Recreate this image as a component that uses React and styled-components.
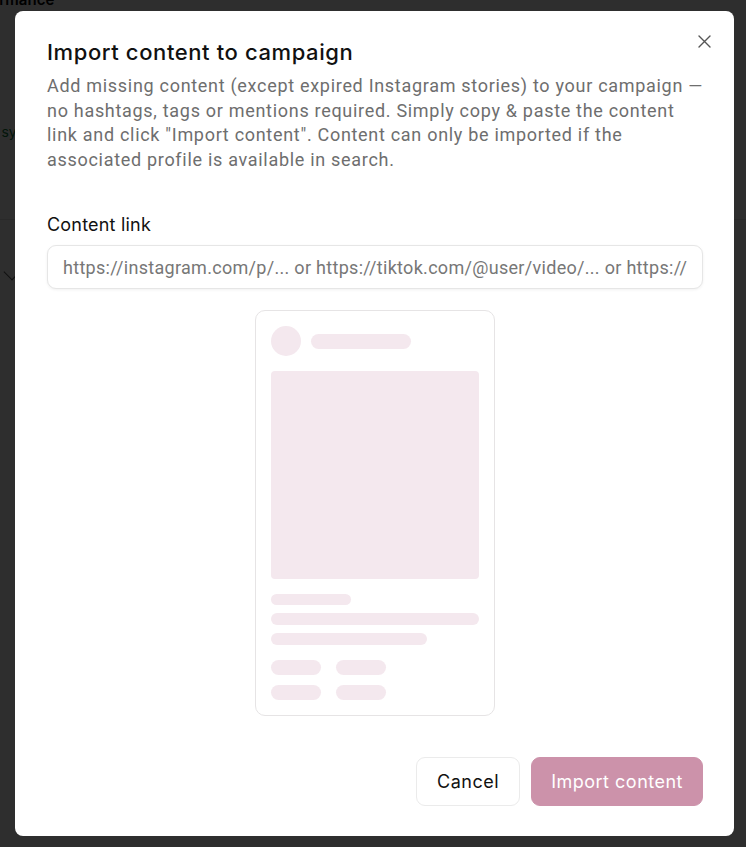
import React from "react";
import styled, { createGlobalStyle } from "styled-components";

const Global = createGlobalStyle`
  html, body { margin: 0; padding: 0; }
  body {
    width: 746px;
    height: 847px;
    overflow: hidden;
    font-family: Inter, "Noto Sans", sans-serif;
    background: #ffffff;
  }
  * { box-sizing: border-box; }
`;

const Page = styled.div`
  width: 746px;
  height: 847px;
  overflow: hidden;
  background: #ffffff;
  display: flex;
  flex-direction: column;
`;

const PageHeading = styled.div`
  font-family: Inter, sans-serif;
  font-weight: 600;
  font-size: 15px;
  line-height: 16px;
  margin: -8px 0 0 -40px;
  color: #000;
  white-space: nowrap;
`;

const PageNote = styled.div`
  margin: 115px 0 0 -64px;
  font-family: Inter, sans-serif;
  font-size: 14px;
  color: #0f7a3a;
  white-space: nowrap;
`;

const PageDivider = styled.div`
  margin-top: 79px;
  height: 1px;
  background: #e2e2e2;
`;

const PageChevron = styled.div`
  margin: 46px 0 0 6px;
  width: 12px;
  height: 12px;
  border-right: 1.5px solid #555;
  border-bottom: 1.5px solid #555;
  transform: rotate(45deg);
`;

const Overlay = styled.div`
  position: fixed;
  inset: 0;
  background: rgba(0, 0, 0, 0.82);
`;

const Modal = styled.div`
  position: fixed;
  left: 15px;
  top: 11px;
  width: 719px;
  height: 825px;
  background: #ffffff;
  border-radius: 8px;
  padding: 26px 31px 30px 32px;
  display: flex;
  flex-direction: column;
`;

const CloseButton = styled.button`
  position: absolute;
  top: 18px;
  right: 18px;
  width: 24px;
  height: 24px;
  padding: 0;
  border: none;
  background: transparent;
  display: flex;
  align-items: center;
  justify-content: center;
  color: #555;
  cursor: pointer;
`;

const Title = styled.h2`
  margin: 0;
  font-family: Inter, sans-serif;
  font-weight: 500;
  font-size: 22px;
  line-height: 30px;
  color: #111;
  letter-spacing: 0.6px;
`;

const Description = styled.p`
  margin: 7px 0 0;
  font-family: Roboto, sans-serif;
  font-size: 18px;
  line-height: 24.6px;
  letter-spacing: 0.7px;
  color: #6e6e6e;
  white-space: nowrap;
`;

const Field = styled.div`
  margin-top: 42px;
  display: flex;
  flex-direction: column;
  gap: 9px;
`;

const Label = styled.label`
  font-family: Inter, sans-serif;
  font-size: 18px;
  line-height: 22px;
  letter-spacing: 0.2px;
  color: #111;
`;

const Input = styled.input`
  width: 100%;
  height: 44px;
  border: 1px solid #e6e6e6;
  border-radius: 9px;
  padding: 0 15px;
  font-family: Roboto, sans-serif;
  font-size: 18px;
  letter-spacing: 0.3px;
  color: #111;
  background: #fff;
  box-shadow: 0 1px 3px rgba(0, 0, 0, 0.06);
  outline: none;
  &::placeholder { color: #777; }
`;

const PreviewWrap = styled.div`
  margin-top: 21px;
  display: flex;
  justify-content: center;
`;

const PreviewCard = styled.div`
  width: 240px;
  height: 406px;
  border: 1px solid #e6e4e5;
  border-radius: 10px;
  padding: 15px;
  display: flex;
  flex-direction: column;
`;

const Row = styled.div`
  display: flex;
  align-items: center;
  gap: ${(p) => p.$gap || 10}px;
  margin-top: ${(p) => p.$mt || 0}px;
`;

const skeleton = "#f4e8ee";

const Avatar = styled.div`
  width: 30px;
  height: 30px;
  border-radius: 50%;
  background: ${skeleton};
`;

const Bar = styled.div`
  width: ${(p) => p.$w}px;
  height: ${(p) => p.$h}px;
  border-radius: ${(p) => p.$h / 2}px;
  background: ${skeleton};
  margin-top: ${(p) => p.$mt || 0}px;
`;

const Media = styled.div`
  margin-top: 15px;
  width: 208px;
  height: 208px;
  border-radius: 4px;
  background: ${skeleton};
`;

const Footer = styled.div`
  margin-top: auto;
  display: flex;
  justify-content: flex-end;
  gap: 11px;
`;

const Button = styled.button`
  height: 49px;
  border-radius: 9px;
  padding: 0 ${(p) => (p.$primary ? 19 : 20)}px;
  font-family: Inter, sans-serif;
  font-size: 18px;
  font-weight: 400;
  letter-spacing: 0.5px;
  cursor: pointer;
  border: 1px solid ${(p) => (p.$primary ? "#cc92aa" : "#ebebeb")};
  background: ${(p) => (p.$primary ? "#cc92aa" : "#ffffff")};
  color: ${(p) => (p.$primary ? "#ffffff" : "#111111")};
`;

export default function App() {
  return (
    <>
      <Global />
      <Page>
        <PageHeading>Performance</PageHeading>
        <PageNote>Posts are synced</PageNote>
        <PageDivider />
        <PageChevron />
      </Page>
      <Overlay />
      <Modal>
        <CloseButton aria-label="Close">
          <svg width="13" height="13" viewBox="0 0 13 13" fill="none">
            <path d="M1 1L12 12M12 1L1 12" stroke="currentColor" strokeWidth="1.4" strokeLinecap="round" />
          </svg>
        </CloseButton>
        <Title>Import content to campaign</Title>
        <Description>
          Add missing content (except expired Instagram stories) to your campaign —
          <br />
          no hashtags, tags or mentions required. Simply copy &amp; paste the content
          <br />
          link and click "Import content". Content can only be imported if the
          <br />
          associated profile is available in search.
        </Description>
        <Field>
          <Label>Content link</Label>
          <Input placeholder="https://instagram.com/p/... or https://tiktok.com/@user/video/... or https://youtube.com/watch?v=..." />
        </Field>
        <PreviewWrap>
          <PreviewCard>
            <Row $gap={10}>
              <Avatar />
              <Bar $w={100} $h={15} />
            </Row>
            <Media />
            <Bar $w={80} $h={12} $mt={15} />
            <Bar $w={208} $h={12} $mt={8} />
            <Bar $w={156} $h={12} $mt={8} />
            <Row $gap={15} $mt={15}>
              <Bar $w={50} $h={15} />
              <Bar $w={50} $h={15} />
            </Row>
            <Row $gap={15} $mt={10}>
              <Bar $w={50} $h={15} />
              <Bar $w={50} $h={15} />
            </Row>
          </PreviewCard>
        </PreviewWrap>
        <Footer>
          <Button>Cancel</Button>
          <Button $primary>Import content</Button>
        </Footer>
      </Modal>
    </>
  );
}
